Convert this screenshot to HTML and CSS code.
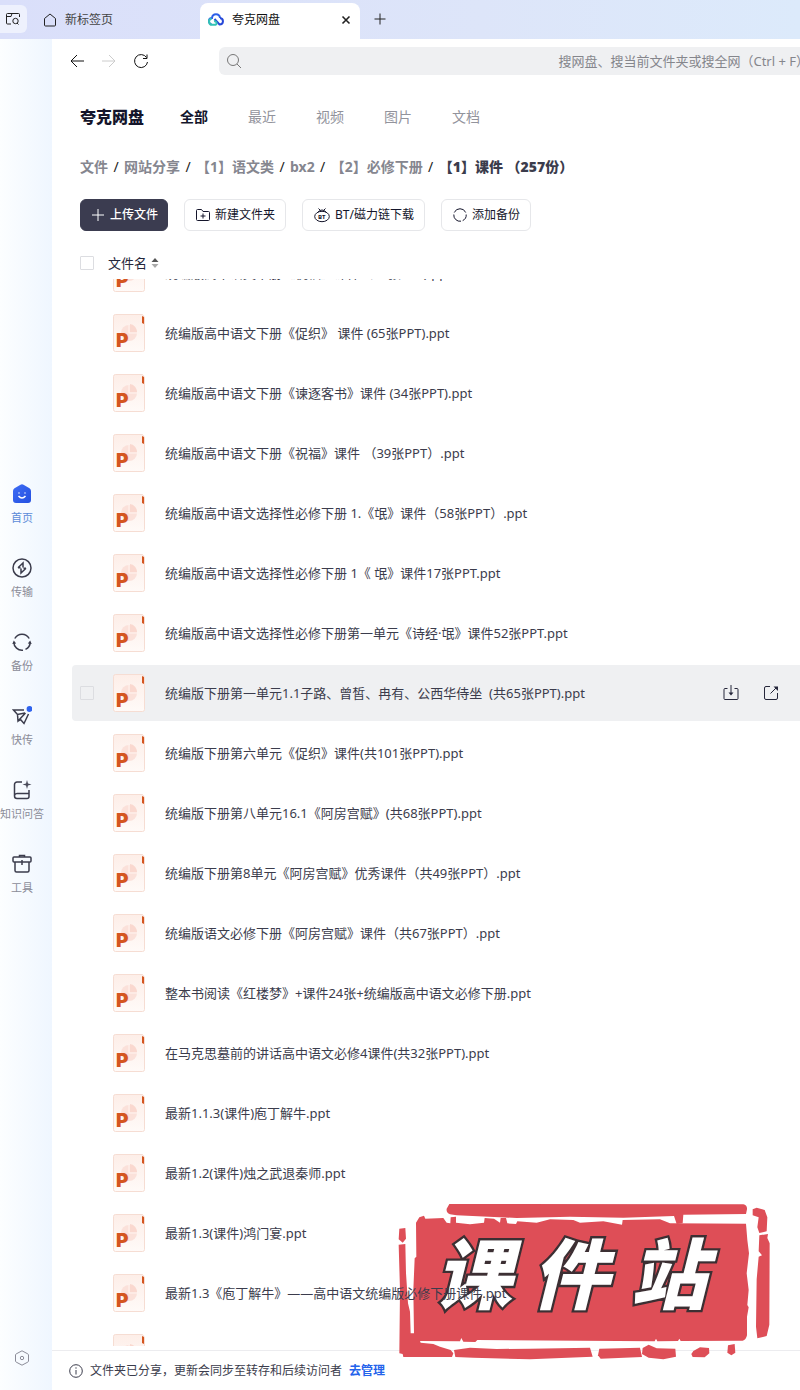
FILE: index.html
```
<!DOCTYPE html>
<html lang="zh-CN">
<head>
    <meta charset="UTF-8">
    <meta name="viewport" content="width=device-width, initial-scale=1.0">
    <title>夸克网盘</title>
    <link rel="stylesheet" href="styles.css">
</head>
<body>
    <svg class="defs" width="0" height="0" aria-hidden="true">
        <defs>
            <linearGradient id="paper" x1="0" y1="0" x2="0" y2="1">
                <stop offset="0" stop-color="#fdeee8"/>
                <stop offset="1" stop-color="#fffaf8"/>
            </linearGradient>
            <linearGradient id="homeFill" x1="0" y1="0" x2="1" y2="1">
                <stop offset="0" stop-color="#3f6df5"/>
                <stop offset="1" stop-color="#2450e0"/>
            </linearGradient>
        </defs>
        <symbol id="ppt" viewBox="0 0 32 38">
            <path d="M2.5.5h27l2 3v32a2 2 0 0 1-2 2h-27a2 2 0 0 1-2-2v-33a2 2 0 0 1 2-2z" fill="url(#paper)" stroke="#f6ddd3"/>
            <circle cx="16" cy="19" r="8" fill="#fbe1da"/>
            <path d="M16 11v8h8" fill="none" stroke="#fff3ef"/>
            <path d="M17 10a8 8 0 0 1 7 8h-7z" fill="#fad8cf"/>
            <path d="M29 2l2 1v7l-2-1z" fill="#d4551f"/>
            <text x="3" y="33" class="ppt-letter">P</text>
        </symbol>
    </svg>

    <header class="tabbar">
        <button class="tab-search" aria-label="搜索标签页">
            <svg width="16" height="16" viewBox="0 0 16 16"><path d="M6 13H2.500a1 1 0 0 1-1-1V3.500a1 1 0 0 1 1-1h11a1 1 0 0 1 1 1V6M1.500 5.500H6l1-3M13.500 13.500L12 12"/><circle cx="10.500" cy="10" r="2.700"/></svg>
        </button>
        <a class="tab" href="#">
            <svg width="14" height="14" viewBox="0 0 14 14"><path d="M1.500 5.500L7 1l5.500 4.500V12a1 1 0 0 1-1 1h-9a1 1 0 0 1-1-1z"/></svg>
            <span>新标签页</span>
        </a>
        <div class="tab active">
            <svg width="16" height="16" viewBox="0 0 16 16"><path d="M3.500 12.500C-.5 11 .5 6 4 6c.5-5 7.500-5 8 0" stroke="#2d5fe8" stroke-width="2"/><path d="M12 6c4 .5 4 6.500-.5 6.500L6.500 7" stroke="#2748d8" stroke-width="2"/><path d="M3.500 6.500C-.5 8 1 12.800 4 12.800h3.500c2-1 1-4-1.500-3.500" stroke="#34c3b5" stroke-width="2"/></svg>
            <span>夸克网盘</span>
            <button class="tab-close" aria-label="关闭标签页">
                <svg width="10" height="10" viewBox="0 0 10 10"><path d="M1.500 1.500l7 7M8.500 1.500l-7 7" stroke-width="1.600"/></svg>
            </button>
        </div>
        <button class="tab-new" aria-label="新建标签页">
            <svg width="12" height="12" viewBox="0 0 12 12"><path d="M6 .5v11M.5 6h11"/></svg>
        </button>
    </header>

    <div class="app">
        <nav class="sidebar">
            <ul class="side-menu">
                <li><a class="current" href="#">
                    <svg width="20" height="20" viewBox="0 0 20 20"><path d="M8.500.7q1.500-.9 3 0l6 3.600q1.500.9 1.500 2.700v9a3 3 0 0 1-3 3H4a3 3 0 0 1-3-3V7q0-1.800 1.500-2.700z" fill="url(#homeFill)" stroke="none"/><path d="M7 8.500v1M13 8.500v1M6.500 12q3.500 4 7 0" stroke="#fff" stroke-width="1.500"/></svg>
                    首页</a></li>
                <li><a href="#">
                    <svg width="20" height="20" viewBox="0 0 20 20"><circle cx="10" cy="10" r="9"/><path d="M6 9.800L11 5v4.500M14 10.200L9 15v-4.500M6 9.800h2.500M14 10.200h-2.500"/></svg>
                    传输</a></li>
                <li><a href="#">
                    <svg width="20" height="20" viewBox="0 0 20 20"><path d="M2.800 6.500a8.200 8.200 0 0 1 14.400 0M18.200 10a8.200 8.200 0 0 1-4.700 7.400M11 18.200a8.200 8.200 0 0 1-9.200-8.200"/><path d="M15.800 11.500l2.400-3 1.500 3.500zM.3 12l1.500-3.500 2.400 3z" fill="currentColor" stroke="none"/></svg>
                    备份</a></li>
                <li><a href="#">
                    <svg width="20" height="20" viewBox="0 0 20 20"><path d="M12 4H1.500L5.500 8.500 13 7M16.500 8L12 17.500 8.500 13.500M5.500 8.500l.5 6.500 7.500-8M6 15l2.500-1.500"/><circle cx="17.500" cy="3" r="2.900" fill="#2f63ee" stroke="none"/></svg>
                    快传</a></li>
                <li><a href="#">
                    <svg width="20" height="20" viewBox="0 0 20 20"><path d="M10 2H5a2.500 2.500 0 0 0-2.500 2.500V16A2.500 2.500 0 0 0 5 18.500h10a2 2 0 0 0 2-2V10M2.500 15.500q.5-2 2.500-2h12"/><path d="M15 0l1 3.500L19.500 4.500 16 5.500 15 9l-1-3.500-3.500-1L14 3.500z" fill="#4b4c5c" stroke="none"/></svg>
                    知识问答</a></li>
                <li><a href="#">
                    <svg width="20" height="20" viewBox="0 0 20 20"><rect x="1" y="3" width="18" height="5" rx="1"/><path d="M7.500 3V1.500h5V3M3 8v8.500A1.500 1.500 0 0 0 4.500 18h11a1.500 1.500 0 0 0 1.500-1.500V8M10 6v5"/></svg>
                    工具</a></li>
            </ul>
            <button class="settings" aria-label="设置">
                <svg width="16" height="16" viewBox="0 0 16 16"><path d="M8 .8l5.800 3.100q.7.400.7 1.100v6q0 .7-.7 1.100L8 15.200l-5.800-3.100Q1.500 11.700 1.500 11V5q0-.7.700-1.100z"/><circle cx="8" cy="8" r="1.700"/></svg>
            </button>
        </nav>

        <main class="main">
            <div class="toolbar">
                <button aria-label="后退"><svg width="16" height="16" viewBox="0 0 16 16"><path d="M15 8H2M8 2L2 8l6 6"/></svg></button>
                <button class="disabled" aria-label="前进" disabled><svg width="16" height="16" viewBox="0 0 16 16"><path d="M1 8h13M8 2l6 6-6 6"/></svg></button>
                <button aria-label="刷新"><svg width="16" height="16" viewBox="0 0 16 16"><path d="M13.500 4.500A6.500 6.500 0 1 0 14.500 9M14 1.500v4h-4"/></svg></button>
                <label class="search">
                    <svg width="16" height="16" viewBox="0 0 16 16"><circle cx="7" cy="7" r="5.500"/><path d="M11 11l4 4"/></svg>
                    <input type="text" aria-label="搜索" placeholder="搜网盘、搜当前文件夹或搜全网（Ctrl + F）">
                </label>
            </div>

            <div class="head">
                <div class="types">
                    <h1>夸克网盘</h1>
                    <a class="on" href="#">全部</a>
                    <a href="#">最近</a>
                    <a href="#">视频</a>
                    <a href="#">图片</a>
                    <a href="#">文档</a>
                </div>
                <div class="crumbs">
                    <a href="#">文件</a><i>/</i><a href="#">网站分享</a><i>/</i><a href="#">【1】语文类</a><i>/</i><a href="#">bx2</a><i>/</i><a href="#">【2】必修下册</a><i>/</i><b>【1】课件 （257份）</b>
                </div>
                <div class="actions">
                    <button class="primary"><svg width="14" height="14" viewBox="0 0 14 14"><path d="M7 1v12M1 7h12"/></svg>上传文件</button>
                    <button><svg width="14" height="14" viewBox="0 0 14 14"><path d="M.5 2.500a1 1 0 0 1 1-1h4l1.500 2h5.500a1 1 0 0 1 1 1v7a1 1 0 0 1-1 1h-11a1 1 0 0 1-1-1zM7 5.500v5M4.500 8h5"/></svg>新建文件夹</button>
                    <button><svg width="16" height="16" viewBox="0 0 16 16"><ellipse cx="8" cy="9.500" rx="7.300" ry="5.200"/><path d="M4 5q4-4 8 0M4.500 1.500L6 3M11.500 1.500L10 3"/><text x="4" y="12" class="bt-letters">BT</text></svg>BT/磁力链下载</button>
                    <button><svg width="14" height="14" viewBox="0 0 14 14"><path d="M1.300 4.500a6.200 6.200 0 0 1 11.400 0M13.200 6.500a6.200 6.200 0 0 1-3.500 6.100M8 13.200a6.200 6.200 0 0 1-7.200-6.700"/></svg>添加备份</button>
                </div>
                <div class="list-head">
                    <input type="checkbox" id="all">
                    <label for="all">文件名</label>
                    <svg width="8" height="12" viewBox="0 0 8 12"><path d="M4 1l3.500 4h-7z" fill="#555" stroke="none"/><path d="M4 11L.5 7h7z" fill="#aaa" stroke="none"/></svg>
                </div>
            </div>

            <div class="list-view">
                <ul class="files">
                    <li><svg class="ppt"><use href="#ppt"/></svg><span>统编版高中语文下册《祝福》课件（27张PPT).ppt</span></li>
                    <li><svg class="ppt"><use href="#ppt"/></svg><span>统编版高中语文下册《促织》 课件 (65张PPT).ppt</span></li>
                    <li><svg class="ppt"><use href="#ppt"/></svg><span>统编版高中语文下册《谏逐客书》课件 (34张PPT).ppt</span></li>
                    <li><svg class="ppt"><use href="#ppt"/></svg><span>统编版高中语文下册《祝福》课件 （39张PPT）.ppt</span></li>
                    <li><svg class="ppt"><use href="#ppt"/></svg><span>统编版高中语文选择性必修下册 1.《氓》课件（58张PPT）.ppt</span></li>
                    <li><svg class="ppt"><use href="#ppt"/></svg><span>统编版高中语文选择性必修下册 1《 氓》课件17张PPT.ppt</span></li>
                    <li><svg class="ppt"><use href="#ppt"/></svg><span>统编版高中语文选择性必修下册第一单元《诗经·氓》课件52张PPT.ppt</span></li>
                    <li class="hover">
                        <input type="checkbox" aria-label="选择文件">
                        <svg class="ppt"><use href="#ppt"/></svg><span>统编版下册第一单元1.1子路、曾皙、冉有、公西华侍坐  (共65张PPT).ppt</span>
                        <div class="row-tools">
                            <button aria-label="下载"><svg width="16" height="16" viewBox="0 0 16 16"><path d="M4.500 3.500H2a1 1 0 0 0-1 1v9a1 1 0 0 0 1 1h12a1 1 0 0 0 1-1v-9a1 1 0 0 0-1-1h-2.500M8 0v9"/><path d="M5.500 7.500h5L8 10.500z" fill="currentColor" stroke="none"/></svg></button>
                            <button aria-label="分享"><svg width="16" height="16" viewBox="0 0 16 16"><path d="M7 1.500H3a1.500 1.500 0 0 0-1.500 1.500v10A1.500 1.500 0 0 0 3 14.500h10a1.500 1.500 0 0 0 1.500-1.500V8M7.500 8.500l6-6"/><path d="M10.500 1.500H15V6z" fill="currentColor" stroke="none"/></svg></button>
                        </div>
                    </li>
                    <li><svg class="ppt"><use href="#ppt"/></svg><span>统编版下册第六单元《促织》课件(共101张PPT).ppt</span></li>
                    <li><svg class="ppt"><use href="#ppt"/></svg><span>统编版下册第八单元16.1《阿房宫赋》(共68张PPT).ppt</span></li>
                    <li><svg class="ppt"><use href="#ppt"/></svg><span>统编版下册第8单元《阿房宫赋》优秀课件（共49张PPT）.ppt</span></li>
                    <li><svg class="ppt"><use href="#ppt"/></svg><span>统编版语文必修下册《阿房宫赋》课件（共67张PPT）.ppt</span></li>
                    <li><svg class="ppt"><use href="#ppt"/></svg><span>整本书阅读《红楼梦》+课件24张+统编版高中语文必修下册.ppt</span></li>
                    <li><svg class="ppt"><use href="#ppt"/></svg><span>在马克思墓前的讲话高中语文必修4课件(共32张PPT).ppt</span></li>
                    <li><svg class="ppt"><use href="#ppt"/></svg><span>最新1.1.3(课件)庖丁解牛.ppt</span></li>
                    <li><svg class="ppt"><use href="#ppt"/></svg><span>最新1.2(课件)烛之武退秦师.ppt</span></li>
                    <li><svg class="ppt"><use href="#ppt"/></svg><span>最新1.3(课件)鸿门宴.ppt</span></li>
                    <li><svg class="ppt"><use href="#ppt"/></svg><span>最新1.3《庖丁解牛》——高中语文统编版必修下册课件.ppt</span></li>
                    <li><svg class="ppt"><use href="#ppt"/></svg></li>
                </ul>
            </div>

            <footer class="notice">
                <svg width="14" height="14" viewBox="0 0 14 14"><circle cx="7" cy="7" r="6.300"/><path d="M7 6v4.500M7 3.300v1.400"/></svg>
                <span>文件夹已分享，更新会同步至转存和后续访问者</span>
                <a href="#">去管理</a>
            </footer>
        </main>
    </div>

    <svg class="stamp" width="410" height="190" viewBox="0 0 1230 570" role="img" aria-label="课件站">
        <g fill="#de4e57">
            <path d="M178 42L1060 43Q1072 46 1071 58L1068 72L880 74L878 100L860 102L852 78L700 83L540 80L380 84L200 76L180 73Q168 68 170 56Z"/>
            <path d="M78 98L88 82L102 77L106 86L160 84L170 98L181 100L182 82L198 80L198 98L240 103L282 98L284 84L312 86L330 98L332 84L348 84L352 100L378 102L382 94L440 98L480 88L550 90L570 98L640 94L696 104L698 90L810 88L840 100L1068 101L1072 150L1077 190L1070 250L1076 300L1072 345L1076 352L1071 380V436Q1068 450 1058 452L872 453L868 446L864 453L802 454L798 446L794 454L262 450L256 456L220 455L214 444L210 454L90 453L92 458L130 462L150 470L182 480L190 490L186 501L40 501L38 492L28 490L30 300L26 164L46 162L48 250L54 340L60 365L62 430L72 430L70 300L74 205L79 200Z"/>
            <path d="M28 116L46 114L48 146L38 158L26 148Z"/>
            <path d="M192 480L240 473L320 477L420 476L600 473L608 500L420 508L250 503L196 501Z"/>
            <path d="M628 476L750 473L756 501L632 506L624 496Z"/>
            <path d="M758 474L776 464L800 475L856 476L858 500L820 508L776 503L756 492Z"/>
            <path d="M910 483L930 472L957 474L958 490L944 502L908 501L904 492Z"/>
            <path d="M1014 466L1034 462L1036 488L1024 496L1012 488Z"/>
            <path d="M1088 58L1100 53L1124 60L1132 82L1130 124L1108 129L1102 112L1106 82L1088 76Z"/>
            <path d="M1108 136L1134 132L1132 144L1139 160L1138 404L1130 438L1102 445L1098 410L1100 268L1106 200L1116 196L1106 184Z"/>
        </g>
        <text x="135 425 720" y="338" class="stamp-text">课件站</text>
    </svg>
</body>
</html>
```
FILE: styles.css
```
* {
    box-sizing: border-box;
}

body {
    margin: 0;
    height: 100vh;
    display: flex;
    flex-direction: column;
    position: relative;
    overflow: hidden;
    background: #fff;
    color: #3b3c4c;
    font-family: "Noto Sans", "Noto Sans CJK SC", sans-serif;
    font-size: 13px;
    line-height: 20px;
}

a {
    color: inherit;
    text-decoration: none;
}

ul {
    list-style: none;
    margin: 0;
    padding: 0;
}

button {
    display: flex;
    align-items: center;
    justify-content: center;
    padding: 0;
    border: 0;
    background: none;
    color: inherit;
    font: inherit;
}

svg {
    flex: none;
    fill: none;
    stroke: currentColor;
}

input[type="checkbox"] {
    appearance: none;
    width: 14px;
    height: 14px;
    margin: 0;
    border: 1px solid #dcdde1;
    border-radius: 1px;
}

.defs {
    position: absolute;
}

/* tabs */
.tabbar {
    flex: none;
    display: flex;
    align-items: flex-end;
    height: 39px;
    background: linear-gradient(90deg, #dadffa, #dde5f9 60%, #dceafb);
    color: #222;
}

.tab-search {
    width: 27px;
    height: 28px;
    margin-bottom: 6px;
    padding-right: 2px;
    border-radius: 0 6px 6px 0;
    background: #eef1fd;
}

.tab {
    display: flex;
    align-items: center;
    gap: 8px;
    width: 157px;
    height: 36px;
    margin-left: 16px;
    padding-bottom: 3px;
    font-size: 12px;
    color: #444;
}

.tab svg {
    color: #222;
}

.tab.active {
    width: 160px;
    margin-left: 0;
    padding: 0 9px 3px 8px;
    border-radius: 8px 8px 0 0;
    background: #fff;
    color: #111;
}

.tab-close {
    margin-left: auto;
}

.tab-new {
    width: 40px;
    height: 40px;
}

/* layout */
.app {
    flex: 1;
    display: flex;
    min-height: 0;
}

.sidebar {
    flex: none;
    display: flex;
    flex-direction: column;
    width: 52px;
    padding-bottom: 24px;
    background: linear-gradient(90deg, #fcfeff, #eff6ff);
}

.side-menu {
    flex: 1;
    display: flex;
    flex-direction: column;
    justify-content: center;
    gap: 30px;
    width: 44px;
    padding-bottom: 8px;
}

.side-menu a {
    display: flex;
    flex-direction: column;
    align-items: center;
    gap: 4px;
    font-size: 11px;
    white-space: nowrap;
    color: #8b8c98;
}

.side-menu svg {
    color: #3b3c4c;
    stroke-width: 1.5;
}

.side-menu .current {
    color: #5b8bd8;
}

.settings {
    width: 44px;
    color: #8b8c98;
}

.main {
    flex: 1;
    display: flex;
    flex-direction: column;
    min-width: 0;
}

.toolbar {
    display: flex;
    align-items: center;
    gap: 16px;
    padding: 8px 0 0 17px;
    color: #111;
}

.toolbar .disabled {
    color: #ccc;
}

.search {
    flex: 1;
    display: flex;
    align-items: center;
    height: 28px;
    margin: 0 -9px 0 54px;
    padding: 0 0 0 7px;
    border-radius: 6px;
    background: #eff0f2;
    color: #777;
}

.search input {
    flex: 1;
    min-width: 0;
    border: 0;
    padding: 0;
    outline: none;
    background: none;
    font: inherit;
    text-align: right;
}

.search input::placeholder {
    color: #85868c;
}

.head {
    padding: 30px 28px 0;
}

.types {
    display: flex;
    align-items: center;
    gap: 40px;
    height: 24px;
    font-size: 14px;
    color: #92939c;
}

.types h1 {
    margin: 0 -4px 0 0;
    font-size: 16px;
    font-weight: 900;
    color: #14152b;
}

.types .on {
    font-weight: 700;
    color: #14152b;
}

.crumbs {
    display: flex;
    margin-top: 28px;
    font-size: 14px;
    font-weight: 700;
    white-space: nowrap;
    color: #85868f;
}

.crumbs i {
    width: 16px;
    text-align: center;
    font-style: normal;
    font-weight: 400;
    color: #222;
}

.crumbs b {
    color: #3b3c4c;
}

.actions {
    display: flex;
    gap: 16px;
    margin-top: 22px;
}

.actions button {
    gap: 5px;
    height: 32px;
    padding: 0 10px 0 11px;
    border: 1px solid #e6e7ea;
    border-radius: 6px;
    font-size: 12px;
    color: #14152b;
}

.actions .primary {
    padding: 0 9px 0 10px;
    border-color: #3b3c50;
    background: #3b3c50;
    font-weight: 500;
    color: #fff;
}

.bt-letters {
    font-size: 6px;
    font-weight: 700;
    fill: #14152b;
    stroke: none;
}

.list-head {
    display: flex;
    align-items: center;
    margin-top: 22px;
    color: #25263a;
}

.list-head label {
    margin: 0 4px 0 14px;
}

/* files, scrolled part of a row down */
.list-view {
    flex: 1;
    min-height: 0;
    margin: 6px 0 4px 20px;
    overflow: hidden;
}

.files {
    display: flex;
    flex-direction: column;
    gap: 4px;
    margin-top: -34px;
}

.files li {
    display: flex;
    align-items: center;
    height: 56px;
    padding-left: 41px;
    white-space: pre;
}

.files span {
    position: relative;
    z-index: 1;
    margin-left: 20px;
}

.files .hover {
    padding-left: 8px;
    border-radius: 4px 0 0 4px;
    background: #eff0f2;
}

.files .hover .ppt {
    margin-left: 19px;
}

.ppt {
    width: 32px;
    height: 38px;
    stroke: none;
}

.ppt-letter {
    font-family: Inter, sans-serif;
    font-size: 19px;
    font-weight: 900;
    fill: #d4551f;
}

.row-tools {
    display: flex;
    gap: 24px;
    margin-left: auto;
    padding-right: 21px;
    color: #25263a;
}

.notice {
    display: flex;
    align-items: center;
    gap: 7px;
    height: 40px;
    padding-left: 17px;
    border-top: 1px solid #ececef;
    font-size: 12px;
}

.notice a {
    font-weight: 700;
    color: #2463eb;
}

.stamp {
    position: absolute;
    right: 0;
    bottom: 10px;
    stroke: none;
}

.stamp-text {
    font-family: "Noto Sans CJK SC", sans-serif;
    font-size: 230px;
    font-style: italic;
    font-weight: 900;
    fill: #fff;
    stroke: #3c2f33;
    stroke-width: 14px;
    paint-order: stroke;
}
```
